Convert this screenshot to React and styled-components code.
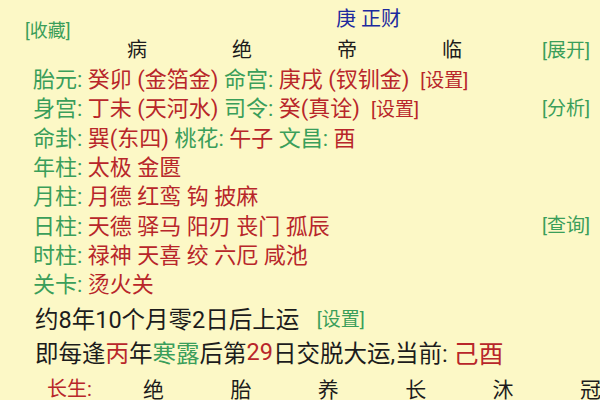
import React from 'react';
import styled, { createGlobalStyle } from 'styled-components';

const Global = createGlobalStyle`
  html, body { margin: 0; padding: 0; }
  body {
    background: #fcf8c6;
    font-family: Roboto, "Noto Sans CJK SC", sans-serif;
  }
`;

const GREEN = '#3a9e5a';
const RED = '#b8262a';
const BLUE = '#1d2a9e';
const INK = '#1c1c1c';

const Page = styled.div`
  width: 600px;
  height: 400px;
  overflow: hidden;
  background: #fcf8c6;
  display: flex;
  flex-direction: column;
`;

const Title = styled.div`
  margin-top: 9px;
  padding-left: 336px;
  font-size: 20px;
  line-height: 20px;
  color: ${BLUE};
  white-space: pre;
`;

const Collect = styled.div`
  margin-top: -7px;
  padding-left: 25px;
  font-size: 18px;
  line-height: 18px;
  color: ${GREEN};
`;

const Columns = styled.div`
  display: flex;
  align-items: center;
  margin-top: -2px;
  height: 20px;
  padding-left: 127px;
  padding-right: 10px;
  font-size: 20px;
  color: ${INK};
`;

const Col = styled.span`
  width: ${(p) => p.$w}px;
  flex: none;
`;

const Row = styled.div`
  display: flex;
  align-items: center;
  height: 29.3px;
  padding-left: 33px;
  padding-right: 10px;
  font-size: 22px;
  flex: none;
`;

const Text = styled.span`
  white-space: pre;
`;

const L = styled.span`
  color: ${GREEN};
`;

const R = styled.span`
  color: ${RED};
`;

const Set = styled.span`
  color: ${(p) => (p.$green ? GREEN : RED)};
  font-size: 19px;
`;

const Action = styled.span`
  margin-left: auto;
  color: ${GREEN};
  font-size: 19px;
`;

const Rows = styled.div`
  margin-top: 4.5px;
  display: flex;
  flex-direction: column;
`;

const Line = styled.div`
  height: 34px;
  display: flex;
  align-items: center;
  padding-left: 35px;
  font-size: 23.5px;
  color: ${INK};
  white-space: pre;
  flex: none;
  margin-top: ${(p) => p.$mt || 0}px;
`;

const Big = styled.span`
  color: ${RED};
  font-size: 25px;
`;

const Stage = styled.div`
  display: grid;
  grid-template-columns: 96px repeat(6, 87.4px);
  align-items: center;
  height: 34px;
  margin-top: 2px;
  padding-left: 47px;
  font-size: 21px;
  color: ${INK};
  flex: none;
  white-space: nowrap;
`;

const StageLabel = styled.span`
  color: ${RED};
  font-size: 20px;
`;

export default function App() {
  return (
    <Page>
      <Global />
      <Title>庚 正财</Title>
      <Collect>[收藏]</Collect>
      <Columns>
        <Col $w={105}>病</Col>
        <Col $w={105}>绝</Col>
        <Col $w={105}>帝</Col>
        <Col $w={40}>临</Col>
        <Action>[展开]</Action>
      </Columns>
      <Rows>
        <Row>
          <Text><L>胎元:</L> <R>癸卯 (金箔金)</R> <L>命宫:</L> <R>庚戌 (钗钏金)</R>  <Set>[设置]</Set></Text>
        </Row>
        <Row>
          <Text><L>身宫:</L> <R>丁未 (天河水)</R> <L>司令:</L> <R>癸(真诠)</R>  <Set>[设置]</Set></Text>
          <Action>[分析]</Action>
        </Row>
        <Row>
          <Text><L>命卦:</L> <R>巽(东四)</R> <L>桃花:</L> <R>午子</R> <L>文昌:</L> <R>酉</R></Text>
        </Row>
        <Row>
          <Text><L>年柱:</L> <R>太极 金匮</R></Text>
        </Row>
        <Row>
          <Text><L>月柱:</L> <R>月德 红鸾 钩 披麻</R></Text>
        </Row>
        <Row>
          <Text><L>日柱:</L> <R>天德 驿马 阳刃 丧门 孤辰</R></Text>
          <Action>[查询]</Action>
        </Row>
        <Row>
          <Text><L>时柱:</L> <R>禄神 天喜 绞 六厄 咸池</R></Text>
        </Row>
        <Row>
          <Text><L>关卡:</L> <R>烫火关</R></Text>
        </Row>
      </Rows>
      <Line $mt={4}>约8年10个月零2日后上运   <Set $green>[设置]</Set></Line>
      <Line>即每逢<R>丙</R>年<L>寒露</L>后第<R>29</R>日交脱大运,当前: <Big>己酉</Big></Line>
      <Stage>
        <StageLabel>长生:</StageLabel>
        <span>绝</span>
        <span>胎</span>
        <span>养</span>
        <span>长</span>
        <span>沐</span>
        <span>冠</span>
      </Stage>
    </Page>
  );
}
